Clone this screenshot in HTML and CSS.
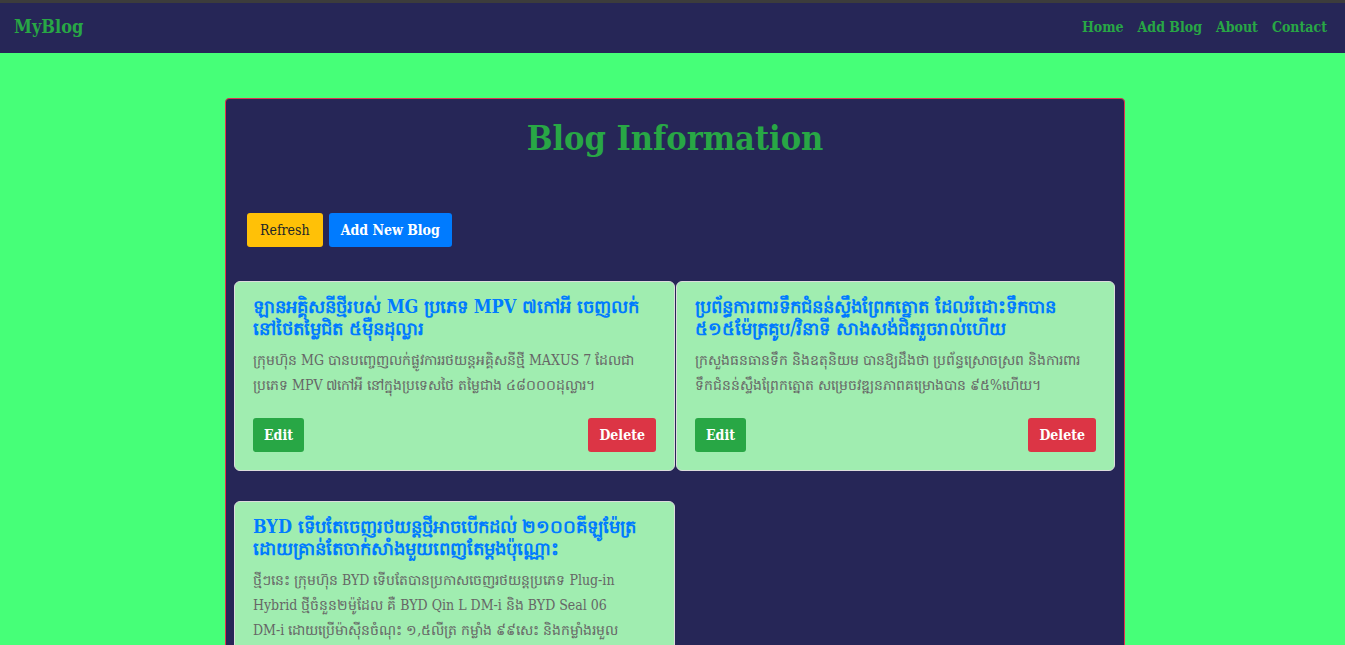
FILE: index.html
```html
<!DOCTYPE html>
<html lang="km">
<head>
<meta charset="utf-8">
<title>MyBlog</title>
<link rel="stylesheet" href="styles.css">
</head>
<body>
<nav class="navbar">
  <a class="brand" href="#">MyBlog</a>
  <ul class="nav-links">
    <li><a href="#">Home</a></li>
    <li><a href="#">Add Blog</a></li>
    <li><a href="#">About</a></li>
    <li><a href="#">Contact</a></li>
  </ul>
</nav>
<main class="page">
  <section class="panel">
    <h1 class="panel-title">Blog Information</h1>
    <div class="actions">
      <button class="btn btn-warning">Refresh</button>
      <button class="btn btn-primary">Add New Blog</button>
    </div>
    <div class="cards">
      <article class="card">
        <h5 class="card-title">ឡានអគ្គិសនីថ្មីរបស់ MG ប្រភេទ MPV ៧កៅអី ចេញលក់នៅថៃតម្លៃជិត ៥ម៉ឺនដុល្លារ</h5>
        <p class="card-text">ក្រុមហ៊ុន MG បានបញ្ចេញលក់ផ្លូវការរថយន្តអគ្គិសនីថ្មី MAXUS 7 ដែលជាប្រភេទ MPV ៧កៅអី នៅក្នុងប្រទេសថៃ តម្លៃជាង ៤៨០០០ដុល្លារ។</p>
        <div class="card-actions">
          <button class="btn btn-success">Edit</button>
          <button class="btn btn-danger">Delete</button>
        </div>
      </article>
      <article class="card">
        <h5 class="card-title">ប្រព័ន្ធការពារទឹកជំនន់ស្ទឹងព្រែកត្នោត ដែលរំដោះទឹកបាន ៥១៥ម៉ែត្រគូប/វិនាទី សាងសង់ជិតរួចរាល់ហើយ</h5>
        <p class="card-text">ក្រសួងធនធានទឹក និងឧតុនិយម បានឱ្យដឹងថា ប្រព័ន្ធស្រោចស្រព និងការពារទឹកជំនន់ស្ទឹងព្រែកត្នោត សម្រេចវឌ្ឍនភាពគម្រោងបាន ៩៥%ហើយ។</p>
        <div class="card-actions">
          <button class="btn btn-success">Edit</button>
          <button class="btn btn-danger">Delete</button>
        </div>
      </article>
      <article class="card">
        <h5 class="card-title">BYD ទើបតែចេញរថយន្តថ្មីអាចបើកដល់ ២១០០គីឡូម៉ែត្រ ដោយគ្រាន់តែចាក់សាំងមួយពេញតែម្តងប៉ុណ្ណោះ</h5>
        <p class="card-text">ថ្មីៗនេះ ក្រុមហ៊ុន BYD ទើបតែបានប្រកាសចេញរថយន្តប្រភេទ <span class="nowrap">Plug-in</span> Hybrid ថ្មីចំនួន២ម៉ូដែល គឺ BYD Qin L <span class="nowrap">DM-i</span> និង BYD Seal 06 <span class="nowrap">DM-i</span> ដោយប្រើម៉ាស៊ីនចំណុះ ១,៥លីត្រ កម្លាំង ៩៩សេះ និងកម្លាំងរមួល ១៣៥ញូតុនម៉ែត្រ។</p>
        <div class="card-actions">
          <button class="btn btn-success">Edit</button>
          <button class="btn btn-danger">Delete</button>
        </div>
      </article>
    </div>
  </section>
</main>
</body>
</html>
```

FILE: styles.css
```css
* { box-sizing: border-box; }

html, body {
  margin: 0;
  padding: 0;
}

body {
  background: #46ff78;
  border-top: 3px solid #3c3c3c;
  font-family: "DejaVu Serif Condensed", "DejaVu Serif", "Noto Sans", serif;
  color: #212529;
}

.navbar {
  height: 50px;
  background: #262657;
  display: flex;
  align-items: center;
  justify-content: space-between;
  padding: 0 18px 3px 14px;
}

.brand {
  color: #28a745;
  font-weight: bold;
  font-size: 18px;
  text-decoration: none;
}

.nav-links {
  list-style: none;
  display: flex;
  gap: 14px;
  margin: 0;
  padding: 0;
}

.nav-links a {
  color: #28a745;
  font-weight: bold;
  font-size: 14px;
  text-decoration: none;
}

.page {
  padding: 45px 0 0 5px;
  display: flex;
  justify-content: center;
}

.panel {
  width: 900px;
  background: #262657;
  border: 1px solid #e0334f;
  border-radius: 4px;
  padding: 16px 0 0;
  min-height: 600px;
}

.panel-title {
  text-align: center;
  color: #28a745;
  font-size: 34px;
  font-weight: bold;
  margin: 0;
  line-height: 46px;
}

.actions {
  display: flex;
  gap: 6px;
  padding: 52px 21px 0;
}

.btn {
  font-family: inherit;
  font-size: 14px;
  height: 34px;
  padding: 0 12px;
  border: none;
  border-radius: 3px;
  color: #fff;
  font-weight: bold;
}

.btn-warning { background: #ffc107; color: #212529; font-weight: normal; padding: 0 13px; }
.btn-primary { background: #007bff; }
.btn-success { background: #28a745; padding: 0 11px; }
.btn-danger { background: #dc3545; padding: 0 11px; }

.cards {
  display: grid;
  grid-template-columns: 441px 439px;
  column-gap: 1px;
  row-gap: 30px;
  padding: 34px 9px 0 8px;
}

.card {
  background: #a0edb0;
  border: 1px solid #dcdcdc;
  border-radius: 6px;
  padding: 14px 18px 18px;
  display: flex;
  flex-direction: column;
}

.card-title {
  color: #007bff;
  font-size: 18px;
  font-weight: bold;
  line-height: 22px;
  margin: 0 0 8px;
}

.card-text {
  color: #666;
  font-size: 14px;
  line-height: 25px;
  margin: 0 16px 20px 0;
}

.nowrap { white-space: nowrap; }

.card-actions {
  margin-top: auto;
  display: flex;
  justify-content: space-between;
}
```
